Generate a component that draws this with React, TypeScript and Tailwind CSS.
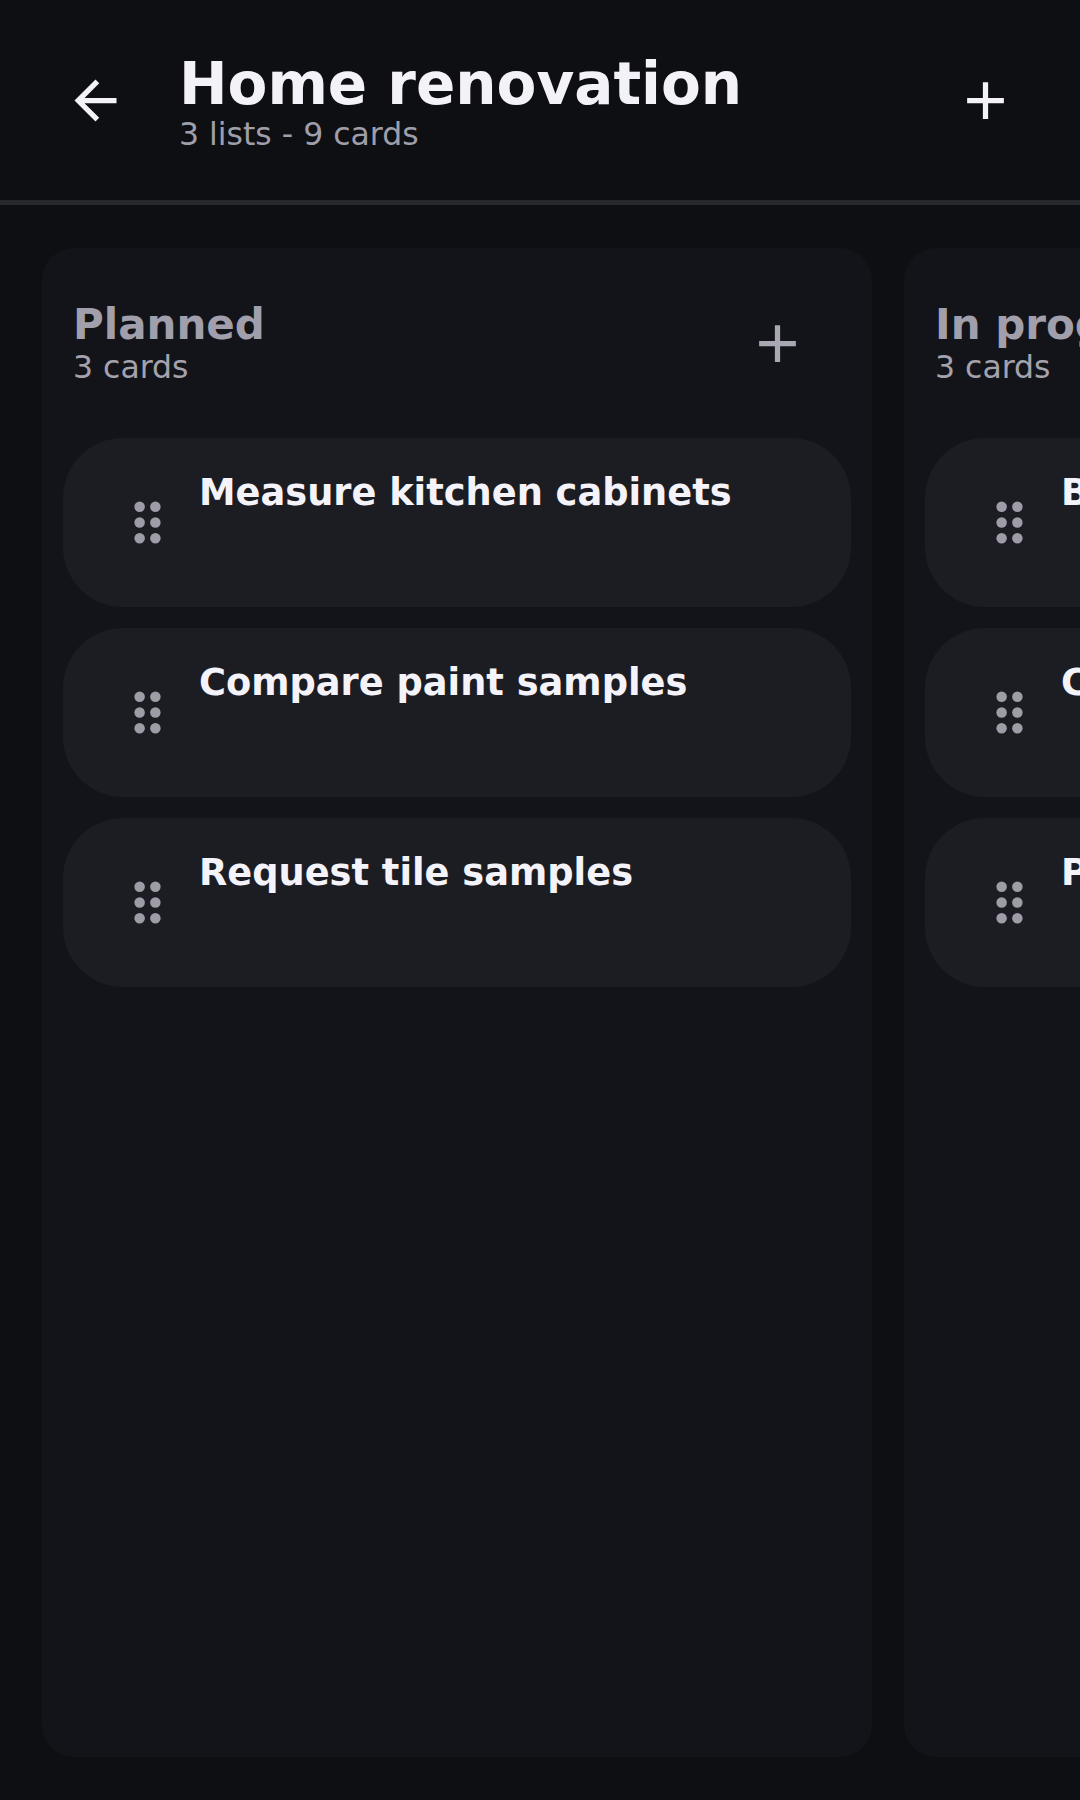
const lists = [
  {
    name: "Planned",
    cards: ["Measure kitchen cabinets", "Compare paint samples", "Request tile samples"],
  },
  {
    name: "In progress",
    cards: ["Buy primer and brushes", "Call the electrician", "Patch hallway drywall"],
  },
  {
    name: "Done",
    cards: ["Remove old carpet", "Pick bathroom fixtures", "Order new faucet"],
  },
];

const ArrowBack = () => (
  <svg viewBox="0 0 24 24" className="w-[63px] h-[63px]" fill="currentColor">
    <path d="M20 11H7.83l5.59-5.59L12 4l-8 8 8 8 1.41-1.41L7.83 13H20v-2z" />
  </svg>
);

const Add = ({ className }: { className?: string }) => (
  <svg viewBox="0 0 24 24" className={className} fill="currentColor">
    <path d="M19 13h-6v6h-2v-6H5v-2h6V5h2v6h6v2z" />
  </svg>
);

const DragIndicator = () => (
  <svg viewBox="0 0 24 24" className="w-[63px] h-[63px] shrink-0 text-[#9d9ca7]" fill="currentColor">
    <circle cx="9" cy="6" r="2" />
    <circle cx="15" cy="6" r="2" />
    <circle cx="9" cy="12" r="2" />
    <circle cx="15" cy="12" r="2" />
    <circle cx="9" cy="18" r="2" />
    <circle cx="15" cy="18" r="2" />
  </svg>
);

export default function App() {
  const total = lists.reduce((n, l) => n + l.cards.length, 0);

  return (
    <div className="min-h-[1800px] w-full overflow-hidden flex flex-col bg-[#0e0f12] font-['DejaVu_Sans',sans-serif]">
      {/* Top bar */}
      <header className="h-[200px] shrink-0 flex items-center">
        <button className="ml-[64px] text-[#f4f2f9]">
          <ArrowBack />
        </button>
        <div className="ml-[52px] mt-[3px] flex flex-col flex-1 min-w-0">
          <h1 className="text-[58px] leading-[64px] font-bold text-[#f4f2f9] whitespace-nowrap">
            Home renovation
          </h1>
          <p className="text-[31.5px] leading-[36px] text-[#9f9eaa] whitespace-nowrap">
            {lists.length} lists - {total} cards
          </p>
        </div>
        <button className="mr-[63px] text-[#f4f2f9]">
          <Add className="w-[63px] h-[63px]" />
        </button>
      </header>
      <div className="h-[5px] shrink-0 bg-[#27282d]" />

      {/* Board */}
      <div className="flex-1 flex gap-[32px] pl-[42px] pt-[43px] pb-[43px] overflow-hidden">
        {lists.map((list) => (
          <section
            key={list.name}
            className="w-[830px] shrink-0 rounded-[32px] bg-[#131419] p-[21px] flex flex-col gap-[21px]"
          >
            <div className="flex items-center pl-[10px] pr-[42px] py-[31px]">
              <div className="flex-1 min-w-0">
                <h2 className="text-[42px] leading-[49px] font-bold text-[#a09fab] whitespace-nowrap">
                  {list.name}
                </h2>
                <p className="text-[31.5px] leading-[37px] text-[#a3a2ad]">
                  {list.cards.length} cards
                </p>
              </div>
              <button className="text-[#a8a7b3]">
                <Add className="w-[63px] h-[63px]" />
              </button>
            </div>

            {list.cards.map((card) => (
              <div
                key={card}
                className="h-[169px] shrink-0 rounded-[60px] bg-[#1c1d22] flex items-center pl-[53px]"
              >
                <DragIndicator />
                <div className="ml-[20px] self-start pt-[33px] min-w-0">
                  <h3 className="text-[36.75px] leading-[43px] font-bold text-[#f5f3fa] whitespace-nowrap">
                    {card}
                  </h3>
                </div>
              </div>
            ))}
          </section>
        ))}
      </div>
    </div>
  );
}
